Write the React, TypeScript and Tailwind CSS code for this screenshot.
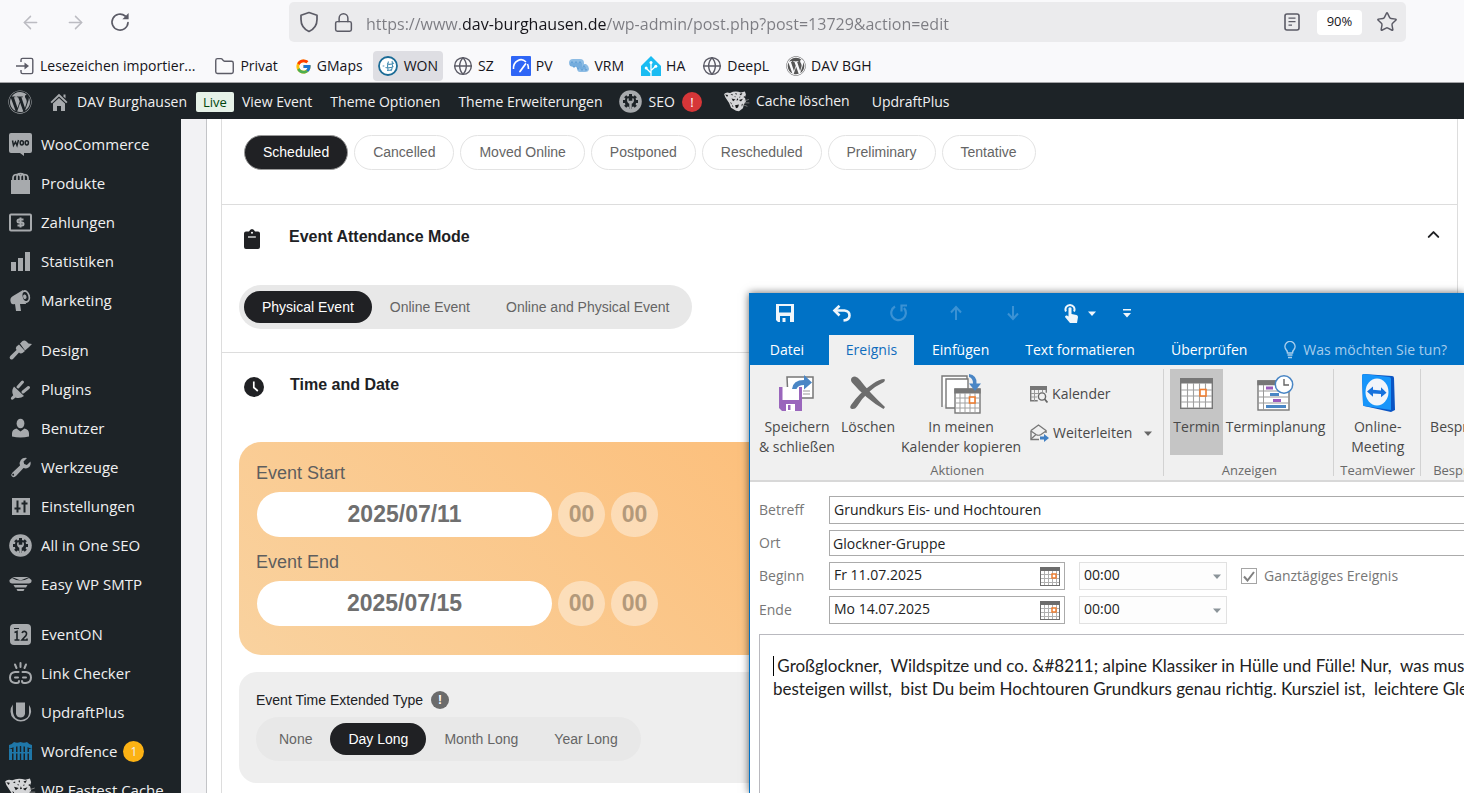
import React from "react";
import {
  ArrowLeft,
  ArrowRight,
  ChevronUp,
  Folder,
  Globe,
  Lock,
  Star,
} from "lucide-react";
import { FcGoogle } from "react-icons/fc";
import { FaWordpress } from "react-icons/fa";

/* ---------- icons ---------- */

const ReloadIcon = () => (
  <svg width="20" height="20" viewBox="0 0 20 20" fill="none">
    <path
      d="M18 10.5A8 8 0 1 1 15.2 4"
      stroke="#5b5b66"
      strokeWidth="1.7"
      strokeLinecap="round"
    />
    <path d="M18.6 1v6.2h-6.2z" fill="#5b5b66" />
  </svg>
);

const ShieldIcon = () => (
  <svg width="20" height="22" viewBox="0 0 20 22" fill="none">
    <path
      d="M10 1.5 18 4.2v4.3c0 5-2.8 9.6-8 12-5.2-2.4-8-7-8-12V4.2z"
      stroke="#5b5b66"
      strokeWidth="1.7"
      strokeLinejoin="round"
    />
  </svg>
);

const ReaderIcon = () => (
  <svg width="16" height="18" viewBox="0 0 16 18" fill="none" stroke="#5b5b66">
    <rect x="1" y="1" width="14" height="16" rx="2" strokeWidth="1.6" />
    <path d="M4.5 5.2h7M4.5 8.7h7M4.5 12.2h3.5" strokeWidth="1.3" />
  </svg>
);

const ImportIcon = () => (
  <svg width="18" height="18" viewBox="0 0 18 18" fill="none">
    <path
      d="M5 5V3q0-1.6 1.6-1.6h8.6q1.6 0 1.6 1.6v12q0 1.6-1.6 1.6H6.6q-1.6 0-1.6-1.6v-2"
      stroke="#5b5b66"
      strokeWidth="1.4"
    />
    <path d="M0 9h9" stroke="#5b5b66" strokeWidth="1.5" />
    <path d="M8.5 5.5 13 9l-4.5 3.5z" fill="#5b5b66" />
  </svg>
);

const WonIcon = () => (
  <svg width="20" height="20" viewBox="0 0 20 20" fill="none">
    <circle cx="10" cy="10" r="9" fill="#fff" stroke="#1a6b96" strokeWidth="1.8" />
    <path
      d="M9 8q4 1 7-1M7.5 11.500q4 1 8-1M9 14.500q3 0 5-1M10.500 5.500q-2 5 0 9.500M14 5q1.500 5-1 10"
      stroke="#4a90b4"
      strokeWidth="1.1"
    />
    <circle cx="5.5" cy="10" r="1" fill="#9cc4d8" />
  </svg>
);

const PvIcon = () => (
  <svg width="20" height="20" viewBox="0 0 20 20" fill="none">
    <rect width="20" height="20" rx="1" fill="#2f66f6" />
    <path
      d="M2.5 13a7.5 8.5 0 0 1 12.5-7M16.5 8q1 2 1 5"
      stroke="#fff"
      strokeWidth="1.6"
    />
    <path d="M9 15.5 14.5 8" stroke="#fff" strokeWidth="1.8" strokeLinecap="round" />
  </svg>
);

const VrmIcon = () => (
  <svg width="20" height="14" viewBox="0 0 20 14">
    <path d="M0 4q0-4 4-4h7q4 0 4 4v4H5Q0 8 0 4z" fill="#8dbce4" />
    <path d="M8 5h9q3 2 3 4.5 0 3.5-4 3.5h-5q-3 0-3-4z" fill="#8dbce4" />
    <path
      d="M2 7V4q1-3 2 0v3q1 3 2 0V4q1-3 2 0v4q1 4 2 1V4q1-3 2 0v6q1 3 2 0V8q1-3 2 0v2q1 3 2 0"
      fill="none"
      stroke="#5d9dd6"
      strokeWidth="1"
    />
  </svg>
);

const HomeAssistantIcon = () => (
  <svg width="20" height="20" viewBox="0 0 20 20">
    <path d="M10 0 20 10v10H0V10z" fill="#1abcf2" />
    <g stroke="#fff" strokeWidth="1.3" fill="none">
      <path d="M10 20V7M10 17l-4.5-4.5M10 14.5l4.5-4" />
    </g>
    <circle cx="10" cy="6.5" r="1.5" fill="#fff" />
    <circle cx="5.2" cy="12" r="1.5" fill="#fff" />
    <circle cx="14.8" cy="10.3" r="1.5" fill="#fff" />
  </svg>
);

const HomeIcon = () => (
  <svg width="18" height="18" viewBox="0 0 18 18" fill="#a7aaad">
    <path d="M9 .8 17.5 9l-1.3 1.3L9 3.5l-7.2 6.8L.5 9z" />
    <path d="M13.5 1.5h2v4l-2-2z" />
    <path d="m9 5 6 5.6V18h-4v-5H7v5H3v-7.4z" />
  </svg>
);

const SeoIcon = () => (
  <svg width="23" height="23" viewBox="0 0 23 23" className="shrink-0">
    <circle cx="11.5" cy="11.5" r="11.3" fill="#a7aaad" />
    <circle cx="11.5" cy="11.5" r="5.8" fill="#1d2327" />
    <path
      d="M11.5 4v15M4 11.5h15M6.2 6.2l10.600 10.600M16.800 6.200 6.200 16.800"
      stroke="#1d2327"
      strokeWidth="3"
    />
    <path
      d="M8.3 8.5q-1 4 2 5.2V19h2.400v-5.300q3-1.200 2-5.200l-1.400-.3v2.500h-3.600V8.200z"
      fill="#a7aaad"
    />
  </svg>
);

const CheetahIcon = ({ size = 26 }: { size?: number }) => (
  <svg width={size} height={size * 0.8} viewBox="0 0 26 21" className="shrink-0">
    <path
      d="M0 3q2-2.500 6-1 5-2.500 11-.500l4-1 1 3-1 3 1 4-2 3-1 4-4 3-3-.5L7 17 5 12 1 6z"
      fill="#d5d6d8"
    />
    <path
      d="M1 3.500 4 4 3 6zM6.500 3.500l2-.5v1.500zM11 2.500l1.500-.5v2zM15.500 3l3-1-1.500 2.500zM7.500 7.500l4 1-2.500 1.800zM15 9l4-1.200-2 2.700zM11 14.500l4-.8-1 3-2 .8zM19.500 6l1.500-1v2zM6 11l1.500 1v2zM17.500 14l1.500-1.500-1 3.500zM12.500 9.500l.8-2.500 1 2zM8.500 14l1 2.500-1.500-1zM10 5.800l1.500-.5v1zM15 6l1.500-.5-.5 1.200z"
      fill="#17191b"
    />
    <path d="m20.500 10 4.500-1.500M20.500 12l5 0M19.500 14l4 1.500" stroke="#999" strokeWidth=".7" />
  </svg>
);

const menuIcons: Record<string, React.ReactNode> = {
  woo: (
    <>
      <path d="M2 0h19q2 0 2 2v16q0 2-2 2h-6v3l-4-3H2q-2 0-2-2V2q0-2 2-2z" />
      <path
        d="m3.500 7.500 1 5L6.500 9 8 12.500l1.500-5.500"
        fill="none"
        stroke="#1d2327"
        strokeWidth="1.500"
      />
      <ellipse cx="12.800" cy="9.800" rx="1.600" ry="2.100" fill="none" stroke="#1d2327" strokeWidth="1.500" />
      <ellipse cx="17.800" cy="9.800" rx="1.600" ry="2.100" fill="none" stroke="#1d2327" strokeWidth="1.500" />
    </>
  ),
  products: (
    <>
      <path d="M2 8h19v14H2z" />
      <path
        d="M4 10V6q0-3.500 4-3.500t3.500 3.500v3M19 10V6q0-3.500-4-3.500T11.500 6v3M8 9V5q0-3.500 3.500-3.500T15 5v4"
        fill="none"
        stroke="#a7aaad"
        strokeWidth="1.700"
      />
    </>
  ),
  payments: (
    <>
      <rect x="1" y="3.500" width="21" height="16" rx="1" fill="none" stroke="#a7aaad" strokeWidth="2" />
      <path
        d="M14.500 8.500H10q-1.500 0-1.500 1.500t1.500 1.500h3q1.500 0 1.500 1.500t-1.500 1.500H8.500M11.500 6.500v10"
        fill="none"
        stroke="#a7aaad"
        strokeWidth="2"
      />
    </>
  ),
  stats: <path d="M2 12h5v9H2zM9 8h5v13H9zM16 2h5v19h-5z" />,
  marketing: (
    <>
      <path d="M14 1 4 7q-4 2-2 7 1 2 4 1l1 7h5l-1-7 6 0z" />
      <ellipse cx="16.500" cy="7.500" rx="4.500" ry="6.500" transform="rotate(-15 16.500 7.500)" />
      <ellipse cx="16.500" cy="7.500" rx="2.800" ry="4.600" transform="rotate(-15 16.500 7.500)" fill="#1d2327" />
      <ellipse cx="15.800" cy="7.800" rx="1.700" ry="2.400" transform="rotate(-15 15.800 7.800)" />
    </>
  ),
  design: (
    <>
      <path d="M11 4.500 13.500 2q2-1.200 4 .5l2 2 3.500.5-3.500 3.500-3.500 3z" />
      <path d="m10 5.500 6 6.500-2.500 2q-2 1-3.500-.5L4 20q-2 1.300-3-.2t.5-3L7.500 11Q6 9 7.500 7.500z" />
    </>
  ),
  plugins: (
    <>
      <path d="M5 8.500 15 18q-4 3-8.500 1.500L4 21.500q-1.500.5-2-.5t.5-2l1.700-1.800Q2 13 5 8.500z" />
      <path d="m9 9 4.500-5M14 14l5.500-4.500" stroke="#a7aaad" strokeWidth="3" strokeLinecap="round" />
    </>
  ),
  users: (
    <>
      <ellipse cx="11.500" cy="6.500" rx="3.900" ry="4.800" />
      <path d="M3 19.500v-3q0-4 4.500-5l4 3 4-3q4.500 1 4.500 5v3q-8.500 2-17 0z" />
    </>
  ),
  tools: (
    <path d="M18 2 14.500 5.500l.7 2.600 2.700.8L21.500 5.500q.8 4-2 6-2.500 1.500-5 .5L7 20q-2 2-4 .5-1.500-2 .5-4L11 9.500q-1-3 .8-5.500Q14 1.300 18 2zM5 18a1 1 0 1 0 .1 1z" />
  ),
  settings: (
    <>
      <path d="M3 3h18v17H3z" />
      <path
        d="M8.500 5.500v12M15.500 17.500v-12M5.500 13.500h6M12.500 8.500h6"
        stroke="#1d2327"
        strokeWidth="2"
      />
    </>
  ),
  smtp: (
    <>
      <path d="M3 4h17l-8.500 3.500z" />
      <path d="M.5 7 3 5q8.500 5 17 0l2.500 2q.5 3-2.500 3.500H3Q0 10 .5 7z" />
      <path d="M4.500 12h14l-1.500 2.500H6zM7.500 16h8l-1 2h-6z" />
    </>
  ),
  eventon: (
    <>
      <rect x="1" y="1" width="21" height="21" rx="4" />
      <path d="M5 5.500h5" stroke="#1d2327" strokeWidth="1" />
      <path
        d="M5.500 9.500 8 8.500V17M5.500 17h5M13 10q1-2 3-1.500 2.500 1 1 4L13 17h5v-1.500"
        fill="none"
        stroke="#1d2327"
        strokeWidth="1.600"
      />
    </>
  ),
  link: (
    <g fill="none" stroke="#a7aaad" strokeWidth="2" strokeLinecap="round">
      <path d="M11.500 1v4M6 2.500 7.500 6M17 2.500 15.500 6" />
      <path d="M9.500 10H6q-5 .5-5 5.500T6 21h2q2 0 2-2M13.500 10H17q5 .5 5 5.500T17 21h-2q-2 0-2-2M6 15.500h3M14 15.500h3" />
    </g>
  ),
  updraft: (
    <>
      <path d="M4 3.500A10.300 10.300 0 1 0 20 4v8a8 7 0 0 1-13.500 5Q3 13 4 3.500z" />
      <path d="M7 1.500h9V13q-1 3.500-4.500 3.500T7 13z" />
    </>
  ),
  wordfence: (
    <g fill="#1f77a8">
      <path d="M0 5q3-.5 5-3 3 1.500 6.500 0 3.500 1.500 6.500 0 2 2.500 5 3v4q-11.500-6-23 0z" />
      <path d="M0 9h3v11H0zM4.500 6H7v14H4.500zM8.500 5h2.300v15H8.500zM12.200 5h2.300v15h-2.300zM16 6h2.500v14H16zM20 9h3v11h-3z" />
      <path d="M0 12h23v1.500H0z" />
    </g>
  ),
};

const MenuIcon = ({ name }: { name: string }) => (
  <svg width="23" height="23" viewBox="0 0 23 23" fill="#a7aaad" className="shrink-0">
    {menuIcons[name]}
  </svg>
);

/* ---------- browser ---------- */

const bookmarks = [
  { label: "Privat", icon: <Folder size={21} strokeWidth={1.6} color="#5b5b66" /> },
  { label: "GMaps", icon: <FcGoogle size={17} /> },
  { label: "WON", icon: <WonIcon />, active: true },
  { label: "SZ", icon: <Globe size={20} strokeWidth={1.7} color="#5b5b66" /> },
  { label: "PV", icon: <PvIcon /> },
  { label: "VRM", icon: <VrmIcon /> },
  { label: "HA", icon: <HomeAssistantIcon /> },
  { label: "DeepL", icon: <Globe size={20} strokeWidth={1.7} color="#5b5b66" /> },
  { label: "DAV BGH", icon: <FaWordpress size={20} color="#555" /> },
];

const BrowserBar = () => (
  <header className="border-b border-[#a3a3a6] bg-[#f9f9fb] text-[#15141a]">
    <div className="flex items-center pt-[2px] pr-[58px] pl-5">
      <div className="flex w-[269px] items-center gap-6">
        <button aria-label="Zurück">
          <ArrowLeft size={21} strokeWidth={1.7} color="#bcbcc2" />
        </button>
        <button aria-label="Vor">
          <ArrowRight size={21} strokeWidth={1.7} color="#bcbcc2" />
        </button>
        <button aria-label="Neu laden">
          <ReloadIcon />
        </button>
      </div>
      <div className="flex h-10 flex-1 items-center rounded-[5px] bg-[#ebebed] pr-2 pl-[10px]">
        <ShieldIcon />
        <Lock size={21} strokeWidth={1.7} color="#5b5b66" className="ml-[14px]" />
        <input
          aria-label="Adresse"
          readOnly
          value="https://www.dav-burghausen.de/wp-admin/post.php?post=13729&action=edit"
          className="ml-3 min-w-0 flex-1 bg-[linear-gradient(90deg,#7c7c82_97px,#15141a_97px,#15141a_241px,#7c7c82_241px)] bg-clip-text pt-[3px] text-base text-transparent outline-none"
        />
        <ReaderIcon />
        <button className="mr-[14px] ml-[17px] h-[25px] w-[45px] rounded-[4px] bg-white text-[13px]">
          90%
        </button>
        <button aria-label="Lesezeichen hinzufügen">
          <Star size={22} strokeWidth={1.6} color="#5b5b66" />
        </button>
      </div>
    </div>
    <nav className="flex h-10 items-center gap-[3px] pt-2 pl-2 text-sm">
      <a href="#" className="flex items-center gap-[6px] pr-[9px] pl-2 whitespace-nowrap">
        <ImportIcon />
        Lesezeichen importier...
      </a>
      {bookmarks.map((item) => (
        <a
          key={item.label}
          href="#"
          className={
            item.active
              ? "flex h-[30px] items-center gap-[6px] rounded-[4px] bg-[#dedee3] px-[5px]"
              : "flex h-[30px] items-center gap-[5px] px-[7px] whitespace-nowrap"
          }
        >
          {item.icon}
          {item.label}
        </a>
      ))}
    </nav>
  </header>
);

/* ---------- wordpress ---------- */

const AdminBar = () => (
  <div className="flex h-9 items-center bg-[#1d2327] pt-px pl-2 text-sm whitespace-nowrap text-[#f0f0f1]">
    <a href="#" aria-label="Über WordPress">
      <FaWordpress size={24} color="#a7aaad" />
    </a>
    <a href="#" className="ml-[18px] flex items-center gap-[9px]">
      <HomeIcon />
      DAV Burghausen
    </a>
    <a
      href="#"
      className="ml-[9px] h-5 rounded-[2px] bg-[#e6f2e8] px-[7px] text-[13px] leading-5 text-[#00450c]"
    >
      Live
    </a>
    <a href="#" className="ml-2">
      View Event
    </a>
    <a href="#" className="ml-[18px]">
      Theme Optionen
    </a>
    <a href="#" className="ml-[18px]">
      Theme Erweiterungen
    </a>
    <a href="#" className="ml-4 flex items-center gap-[7px]">
      <SeoIcon />
      SEO
      <span className="size-5 rounded-full bg-[#d63638] text-center text-[13px] leading-5 text-white">
        !
      </span>
    </a>
    <a href="#" className="ml-[22px] flex items-center gap-[6px]">
      <CheetahIcon />
      Cache löschen
    </a>
    <a href="#" className="ml-[22px]">
      UpdraftPlus
    </a>
  </div>
);

const menuGroups = [
  [
    { label: "WooCommerce", icon: "woo" },
    { label: "Produkte", icon: "products" },
    { label: "Zahlungen", icon: "payments" },
    { label: "Statistiken", icon: "stats" },
    { label: "Marketing", icon: "marketing" },
  ],
  [
    { label: "Design", icon: "design" },
    { label: "Plugins", icon: "plugins" },
    { label: "Benutzer", icon: "users" },
    { label: "Werkzeuge", icon: "tools" },
    { label: "Einstellungen", icon: "settings" },
    { label: "All in One SEO", icon: "seo" },
    { label: "Easy WP SMTP", icon: "smtp" },
  ],
  [
    { label: "EventON", icon: "eventon" },
    { label: "Link Checker", icon: "link" },
    { label: "UpdraftPlus", icon: "updraft" },
    { label: "Wordfence", icon: "wordfence", count: 1 },
    { label: "WP Fastest Cache", icon: "cheetah" },
  ],
];

const renderMenuIcon = (icon: string) => {
  if (icon === "seo") return <SeoIcon />;
  if (icon === "cheetah")
    return (
      <span className="-ml-1 w-[27px] shrink-0">
        <CheetahIcon size={31} />
      </span>
    );
  return <MenuIcon name={icon} />;
};

const SideMenu = () => (
  <nav className="flex w-[181px] shrink-0 flex-col gap-[11px] overflow-hidden bg-[#1d2327] pt-[6px] text-[15px] text-[#f0f0f1]">
    {menuGroups.map((group, i) => (
      <ul key={i}>
        {group.map((item) => (
          <li key={item.label}>
            <a href="#" className="flex h-[39px] items-center gap-[9px] pl-[9px] whitespace-nowrap">
              {renderMenuIcon(item.icon)}
              {item.label}
              {item.count && (
                <span className="-ml-[3px] size-[21px] rounded-full bg-[#fcb214] text-center text-xs leading-[21px]">
                  {item.count}
                </span>
              )}
            </a>
          </li>
        ))}
      </ul>
    ))}
  </nav>
);

const statuses = [
  "Scheduled",
  "Cancelled",
  "Moved Online",
  "Postponed",
  "Rescheduled",
  "Preliminary",
  "Tentative",
];

interface SegmentedProps {
  options: string[];
  selected: string;
}

const Segmented = ({ options, selected }: SegmentedProps) => (
  <div className="flex h-11 w-fit items-center rounded-full bg-[#e8e8e8] px-[5px]">
    {options.map((option) => (
      <button
        key={option}
        className={
          option === selected
            ? "h-8 rounded-full bg-[#202124] px-[18px] text-white"
            : "h-8 px-[18px] text-[#656565]"
        }
      >
        {option}
      </button>
    ))}
  </div>
);

interface DateRowProps {
  id: string;
  label: string;
  date: string;
}

const DateRow = ({ id, label, date }: DateRowProps) => (
  <div>
    <label htmlFor={id} className="block text-lg leading-6 text-[#5e5e5e]">
      {label}
    </label>
    <div className="mt-[7px] flex gap-[6px] pl-px text-[23px] font-bold">
      <input
        id={id}
        readOnly
        value={date}
        className="h-[45px] w-[295px] rounded-full bg-white text-center text-[#6f6f6f]"
      />
      {["Stunde", "Minute"].map((part) => (
        <input
          key={part}
          aria-label={`${label} ${part}`}
          readOnly
          value="00"
          className="h-[45px] w-[47px] rounded-full bg-white/40 text-center text-[#b3997a]"
        />
      ))}
    </div>
  </div>
);

const EventForm = () => (
  <main className="flex min-w-0 flex-1 bg-[#f2f2f4] pl-[25px] font-['Liberation_Sans',sans-serif] text-sm text-[#202124]">
    <div className="min-w-0 flex-1 border-l border-[#c3c4c7] bg-white pr-[6px] pl-[14px]">
      <div className="h-full border-x border-[#dddddd]">
        <section className="flex h-[86px] gap-[6px] border-b border-[#dddddd] pt-4 pl-[22px]">
          {statuses.map((status, i) => (
            <button
              key={status}
              className={
                i === 0
                  ? "h-[35px] rounded-full border border-[#9a9a9a] bg-[#202124] px-[18px] pb-[2px] text-white"
                  : "h-[35px] rounded-full border border-[#e3e3e3] px-[18px] pb-[2px] text-[#656565]"
              }
            >
              {status}
            </button>
          ))}
        </section>

        <section className="h-[148px] border-b border-[#dddddd] pr-[14px] pl-[17px]">
          <div className="flex h-20 items-start pt-5">
            <svg width="16" height="20" viewBox="0 0 16 20" className="mt-1 ml-[5px]" fill="#202124">
              <path d="M2 2.500h3Q6 0 8 0t3 2.500h3q2 0 2 2V18q0 2-2 2H2q-2 0-2-2V4.500q0-2 2-2z" />
              <path d="M4 8h8" stroke="#fff" strokeWidth="1.200" />
              <circle cx="8" cy="3.800" r="1" fill="#fff" />
            </svg>
            <h2 className="ml-[29px] flex-1 text-base font-bold">Event Attendance Mode</h2>
            <button aria-label="Einklappen" className="flex">
              <ChevronUp size={19} strokeWidth={2.5} />
            </button>
          </div>
          <Segmented
            options={["Physical Event", "Online Event", "Online and Physical Event"]}
            selected="Physical Event"
          />
        </section>

        <section className="px-[17px]">
          <div className="flex h-[89px] items-start pt-5">
            <svg width="20" height="20" viewBox="0 0 20 20" className="mt-1 ml-[5px]">
              <circle cx="10" cy="10" r="10" fill="#202124" />
              <path d="M9.800 4.500V10.500l4 3.500" fill="none" stroke="#fff" strokeWidth="1.700" />
            </svg>
            <h2 className="ml-[26px] text-base font-bold">Time and Date</h2>
          </div>
          <div className="flex h-[213px] flex-col gap-[13px] rounded-[22px] bg-[linear-gradient(45deg,#f9d29f,#ffae5b)] pt-[19px] pl-[17px]">
            <DateRow id="event-start" label="Event Start" date="2025/07/11" />
            <DateRow id="event-end" label="Event End" date="2025/07/15" />
          </div>
          <div className="mt-[17px] h-[111px] rounded-[18px] bg-[#eeeeee] pt-[18px] pl-[17px]">
            <p className="mb-[7px] flex items-center gap-2 leading-5">
              Event Time Extended Type
              <span className="size-[18px] rounded-full bg-[#6b6b6b] text-center text-xs leading-[18px] font-bold text-white">
                !
              </span>
            </p>
            <Segmented
              options={["None", "Day Long", "Month Long", "Year Long"]}
              selected="Day Long"
            />
          </div>
        </section>
      </div>
    </div>
  </main>
);

/* ---------- outlook ---------- */

const CalendarGrid = ({ width, height }: { width: number; height: number }) => (
  <svg width={width} height={height} viewBox="0 0 33 31">
    <rect x=".7" y=".7" width="31.600" height="29.600" fill="#fff" stroke="#777" strokeWidth="1.400" />
    <rect width="33" height="5.500" fill="#777" />
    <path
      d="M1 12h31M1 18h31M1 24h31M7.500 5v25M13.500 5v25M19.500 5v25M25.500 5v25"
      stroke="#a0a0a0"
      strokeWidth="1.100"
    />
    <rect x="20" y="11.500" width="6" height="6.500" fill="#fff" stroke="#ed7d31" strokeWidth="1.600" />
  </svg>
);

const SmallCalendarIcon = () => (
  <svg width="20" height="19" viewBox="0 0 20 19">
    <rect x=".5" y=".5" width="19" height="18" fill="#fff" stroke="#6d6d6d" />
    <path d="M0 0h20v4H0z" fill="#6d6d6d" />
    <path d="M1 7.500h18M1 11.500h18M1 15.500h18M4.500 4v14M8.500 4v14M12.500 4v14M16.500 4v14" stroke="#b0b0b0" />
    <rect x="12" y="7" width="4" height="4" fill="#fff" stroke="#ed7d31" strokeWidth="1.500" />
  </svg>
);

const SaveCloseIcon = () => (
  <svg width="37" height="38" viewBox="0 0 37 38">
    <path d="M9 3h26v21H10z" fill="#fff" stroke="#777" strokeWidth="1.500" />
    <path d="M25 17h7M25 20h7" stroke="#999" strokeWidth="1.200" />
    <path d="M1 13h23v24H4l-3-3z" fill="#9a66bc" />
    <path d="M4.500 13H21v13H4.500z" fill="#fff" />
    <path d="M8 30h9v7H8z" fill="#fff" />
    <path d="M10 31h2.500v5H10z" fill="#9a66bc" />
    <path d="M14 15q1-9 12-9V1l8 7.500-8 7V11q-6 0-7.500 4z" fill="#4a86c5" />
  </svg>
);

const DeleteIcon = () => (
  <svg width="37" height="36" viewBox="0 0 37 36" fill="#6d6d6d">
    <path d="M2 5q0-3.500 4-3.500 3 .5 5 3.500 9 12 25 27l-1.500 2Q17 24 3 7.500 2 6 2 5z" />
    <path d="M35.500 4q-5 0-12 5Q10 18 2 30q-2 3 1 4 3 .5 5-2.500Q18 15 35 7q1.500-1.500.5-3z" />
  </svg>
);

const CopyCalendarIcon = () => (
  <svg width="40" height="41" viewBox="0 0 40 41">
    <path d="M1 34V3h25v6" fill="#fff" stroke="#777" strokeWidth="1.400" />
    <path d="M5 35V6h22v29z" fill="#fff" stroke="#777" strokeWidth="1.400" />
    <rect x="14" y="16" width="25" height="24" fill="#fff" stroke="#777" strokeWidth="1.400" />
    <path d="M13.300 15.500h26.400v5H13.300z" fill="#777" />
    <path d="M14 25h25M14 30h25M14 35h25M19 20v20M24 20v20M29 20v20M34 20v20" stroke="#a0a0a0" />
    <rect x="28.500" y="24" width="5.500" height="6" fill="#fff" stroke="#ed7d31" strokeWidth="1.600" />
    <path d="M28 1q8 1 7.500 9.500H40l-6 7.500-6-7.500h4Q32 5 28 4z" fill="#4a86c5" />
  </svg>
);

const ScheduleIcon = () => (
  <svg width="37" height="36" viewBox="0 0 37 36">
    <rect x="1" y="6" width="31" height="29" fill="#fff" stroke="#777" strokeWidth="1.400" />
    <path d="M.3 5.300h32v5H.3z" fill="#777" />
    <path d="M1 16h31M1 22h31M1 28h31M6.500 10v25" stroke="#999" />
    <path d="M9 13h7M16 25.500h8" stroke="#9a5bbc" strokeWidth="2.800" />
    <path d="M13 19.500h9M9 31.500h20" stroke="#4a86c5" strokeWidth="2.800" />
    <circle cx="27" cy="9.500" r="8.700" fill="#fff" stroke="#4a86c5" strokeWidth="1.500" />
    <path d="M27 4v6h5" fill="none" stroke="#666" strokeWidth="1.400" />
  </svg>
);

const TeamViewerIcon = () => (
  <svg width="34" height="40" viewBox="0 0 34 40">
    <path d="M1 3q0-2 2-2l28 2q2 0 2 2l1 32-4 2-27-6q-1 0-1-2z" fill="#0a55c4" />
    <path d="M1 3q0-2 2-2l25 3q2 0 2 2v31L3 33q-1 0-1-2z" fill="#1795fa" />
    <ellipse cx="16" cy="19" rx="11.500" ry="13.500" fill="#f1f5fa" />
    <path d="m6 18.500 6-5v3.300l8 .8v-3.300l5.500 5.500-5.500 4.500v-3.200l-8-.7v3.300z" fill="#1672dd" />
  </svg>
);

const Caret = ({ color }: { color: string }) => (
  <svg width="8" height="5" viewBox="0 0 8 5" fill={color}>
    <path d="M0 .5h8L4 5z" />
  </svg>
);

const QuickAccess = () => (
  <div className="flex h-[42px] items-center pb-[2px] pl-[6px] [&>button]:flex [&>button]:w-[57px] [&>button]:justify-center">
    <button aria-label="Speichern">
      <svg width="18" height="18" viewBox="0 0 18 18">
        <path d="M0 0h18v18H2l-2-2z" fill="#f0f6fb" />
        <path d="M3 2h12v6.500H3zM4 12h10v6H4z" fill="#0072c6" />
        <path d="M6.500 14h3v4h-3z" fill="#f0f6fb" />
      </svg>
    </button>
    <button aria-label="Rückgängig">
      <svg width="19" height="17" viewBox="0 0 19 17" fill="none" stroke="#f0f6fb">
        <path d="M3 5.500h9.500q5 .5 5 5t-6 5" strokeWidth="2.600" />
        <path d="M7.500.8 2.500 5.500l5 5" strokeWidth="2.600" />
      </svg>
    </button>
    <button aria-label="Wiederholen">
      <svg width="18" height="18" viewBox="0 0 18 18" fill="none" stroke="#3b92d4" strokeWidth="2.200">
        <path d="M5 2.500a7.300 7.300 0 1 0 9 1.500" />
        <path d="M17 1.500h-5.500v6" />
      </svg>
    </button>
    <button aria-label="Vorheriges Element">
      <svg width="12" height="16" viewBox="0 0 12 16" fill="none" stroke="#3b92d4" strokeWidth="2">
        <path d="M6 15V2M1 7.500 6 2l5 5.500" />
      </svg>
    </button>
    <button aria-label="Nächstes Element">
      <svg width="12" height="16" viewBox="0 0 12 16" fill="none" stroke="#3b92d4" strokeWidth="2">
        <path d="M6 1v13M1 8.500 6 14l5-5.500" />
      </svg>
    </button>
    <button aria-label="Touch-/Mausmodus" className="items-center gap-[10px] pl-5">
      <svg width="14" height="20" viewBox="0 0 14 20" className="shrink-0">
        <path d="M2 8.500a4.500 4.500 0 1 1 8 0" fill="none" stroke="#f0f6fb" strokeWidth="2" />
        <path
          d="M4.500 5q1.500-1.500 3 0v6l5 1q1.500.5 1.500 2l-1 6H6l-5-6q0-2 2-1.500l1.500 1z"
          fill="#f0f6fb"
        />
      </svg>
      <Caret color="#f0f6fb" />
    </button>
    <button aria-label="Anpassen">
      <svg width="8" height="9" viewBox="0 0 8 9" fill="#f0f6fb">
        <path d="M0 0h8v1.600H0zM0 4h8L4 8.500z" />
      </svg>
    </button>
  </div>
);

const BigButton = ({
  icon,
  lines,
  active,
}: {
  icon: React.ReactNode;
  lines: string[];
  active?: boolean;
}) => (
  <button
    className={
      active
        ? "flex h-[86px] flex-col items-center bg-[#c5c5c5] px-[3px]"
        : "flex h-[86px] flex-col items-center px-[3px]"
    }
  >
    <span className="flex h-12 shrink-0 items-center">{icon}</span>
    {lines.map((line) => (
      <span key={line} className="leading-5 whitespace-nowrap">
        {line}
      </span>
    ))}
  </button>
);

const RibbonGroup = ({
  title,
  children,
}: {
  title: string;
  children: React.ReactNode;
}) => (
  <div className="relative flex shrink-0 flex-col justify-between px-[6px] pt-1 after:absolute after:top-1 after:right-0 after:bottom-1 after:border-r after:border-[#d2d2d2]">
    <div className="flex">{children}</div>
    <p className="text-center text-[13px] leading-5 text-[#6a6a6a]">{title}</p>
  </div>
);

const Ribbon = () => (
  <div className="flex h-[117px] border-b-2 border-[#d8d8d8] bg-[#f0f0f0] text-sm text-[#494949]">
    <RibbonGroup title="Aktionen">
      <div className="flex">
        <BigButton icon={<SaveCloseIcon />} lines={["Speichern", "& schließen"]} />
        <BigButton icon={<DeleteIcon />} lines={["Löschen"]} />
        <BigButton icon={<CopyCalendarIcon />} lines={["In meinen", "Kalender kopieren"]} />
      </div>
      <div className="ml-[6px] flex flex-col gap-[19px] pt-[15px]">
        <button className="flex items-center gap-1 leading-5">
          <svg width="18" height="17" viewBox="0 0 18 17" fill="none">
            <path d="M.7.7h15.600v6M.7.700v14h7" stroke="#777" strokeWidth="1.400" />
            <path d="M0 0h17v4H0z" fill="#777" />
            <path d="M1 7.500h8M1 11h6M4.500 4v11M8.500 4v4M12.500 4v2" stroke="#999" />
            <circle cx="12" cy="10.500" r="3.600" fill="#f0f0f0" stroke="#666" strokeWidth="1.400" />
            <path d="m14.500 13 3 3.500" stroke="#666" strokeWidth="1.800" />
          </svg>
          Kalender
        </button>
        <button className="flex items-center gap-1 pr-[6px] leading-5">
          <svg width="19" height="18" viewBox="0 0 19 18" fill="none">
            <path d="M1 6.500 8.500 1 16 6.500V9M1 6.500v9h8" stroke="#777" strokeWidth="1.400" />
            <path d="m1 7 5 3.500q2.500 1.500 5 0L16 7M1 15l5-4.500" stroke="#777" strokeWidth="1.200" />
            <path d="M10 12.500h4V10l5 4-5 4v-2.500h-4z" fill="#3f7fc4" />
          </svg>
          Weiterleiten
          <span className="pl-2">
            <Caret color="#666" />
          </span>
        </button>
      </div>
    </RibbonGroup>
    <RibbonGroup title="Anzeigen">
      <BigButton icon={<CalendarGrid width={33} height={31} />} lines={["Termin"]} active />
      <BigButton icon={<ScheduleIcon />} lines={["Terminplanung"]} />
    </RibbonGroup>
    <RibbonGroup title="TeamViewer">
      <div className="flex flex-1 justify-center">
        <BigButton icon={<TeamViewerIcon />} lines={["Online-", "Meeting"]} />
      </div>
    </RibbonGroup>
    <RibbonGroup title="Besprechung">
      <BigButton icon={null} lines={["Besprechung"]} />
    </RibbonGroup>
  </div>
);

const fields = [
  { id: "beginn", label: "Beginn", date: "Fr 11.07.2025" },
  { id: "ende", label: "Ende", date: "Mo 14.07.2025" },
];

const AppointmentForm = () => (
  <div className="flex flex-1 flex-col bg-white pt-[14px] pl-[9px] text-sm text-[#222]">
    <div className="flex flex-col gap-[6px]">
      <div className="flex items-center">
        <label htmlFor="betreff" className="w-[70px] text-[#777]">
          Betreff
        </label>
        <input
          id="betreff"
          readOnly
          value="Grundkurs Eis- und Hochtouren"
          className="h-7 min-w-0 flex-1 border border-r-0 border-[#ababab] px-1 pb-[2px]"
        />
      </div>
      <div className="flex items-center">
        <label htmlFor="ort" className="w-[70px] text-[#777]">
          Ort
        </label>
        <input
          id="ort"
          readOnly
          value="Glockner-Gruppe"
          className="h-[26px] min-w-0 flex-1 border border-r-0 border-[#ababab] px-[3px]"
        />
      </div>
      {fields.map((field) => (
        <div key={field.id} className="flex items-center">
          <label htmlFor={field.id} className="w-[70px] text-[#777]">
            {field.label}
          </label>
          <div className="flex h-7 w-[236px] items-center border border-[#ababab] px-1">
            <input
              id={field.id}
              readOnly
              value={field.date}
              className="min-w-0 flex-1 pb-[2px] outline-none"
            />
            <SmallCalendarIcon />
          </div>
          <div className="relative ml-[14px]">
            <select
              aria-label={`${field.label} Uhrzeit`}
              className="h-7 w-[148px] appearance-none border border-[#e1e1e1] bg-[#fdfdfd] px-1 pb-[2px]"
            >
              <option>00:00</option>
            </select>
            <span className="pointer-events-none absolute top-3 right-[6px]">
              <Caret color="#8b9499" />
            </span>
          </div>
          {field.id === "beginn" && (
            <label className="ml-[14px] flex items-center gap-[7px] text-[#777]">
              <input
                type="checkbox"
                defaultChecked
                className="peer size-4 appearance-none border border-[#a5a5a5] bg-white"
              />
              <svg
                width="12"
                height="11"
                viewBox="0 0 12 11"
                className="-mr-[2px] -ml-[21px] hidden peer-checked:block"
              >
                <path d="m1 5.500 3.500 4L11 1" fill="none" stroke="#808080" strokeWidth="2" />
              </svg>
              <span className="pl-1">Ganztägiges Ereignis</span>
            </label>
          )}
        </div>
      ))}
    </div>
    <div className="relative mt-[10px] flex flex-1 border-t border-l border-[#b9b9bf]">
      <textarea
        aria-label="Beschreibung"
        readOnly
        wrap="off"
        defaultValue={
          " Großglockner,  Wildspitze und co. &#8211; alpine Klassiker in Hülle und Fülle! Nur,  was musst Du\nbesteigen willst,  bist Du beim Hochtouren Grundkurs genau richtig. Kursziel ist,  leichtere Gletscher"
        }
        className="min-w-0 flex-1 resize-none overflow-hidden pt-[19px] pl-[13px] font-['Lato',sans-serif] text-[17px] leading-[23px] outline-none"
      />
      <span className="absolute top-[21px] left-[13px] h-5 w-px bg-black" />
    </div>
  </div>
);

const tabs = ["Einfügen", "Text formatieren", "Überprüfen"];

const OutlookWindow = () => (
  <div className="absolute top-[293px] right-0 bottom-0 left-[749px] flex flex-col overflow-hidden border-l border-[#0072c6] bg-white shadow-[0_0_8px_rgba(0,0,0,0.6)]">
    <div className="bg-[#0072c6] text-white">
      <QuickAccess />
      <div className="flex h-[30px] items-center text-sm whitespace-nowrap">
        <button className="w-[79px] pr-[5px]">Datei</button>
        <button className="h-full w-[85px] bg-[#f0f0f0] text-[#0f6cbd]">Ereignis</button>
        {tabs.map((tab) => (
          <button key={tab} className="px-[18px]">
            {tab}
          </button>
        ))}
        <button className="flex items-center gap-[7px] pl-[19px] text-[#a6cdec]">
          <svg width="12" height="18" viewBox="0 0 12 18" fill="none" stroke="#a6cdec">
            <path d="M3.500 12q0-2-1.500-3.500A5 5 0 1 1 10 8.500Q8.500 10 8.500 12z" strokeWidth="1.500" />
            <path d="M3.500 14h5M4 16.500h4" strokeWidth="1.500" />
          </svg>
          Was möchten Sie tun?
        </button>
      </div>
    </div>
    <Ribbon />
    <AppointmentForm />
  </div>
);

const App = () => {
  return (
    <div className="relative flex h-screen flex-col overflow-hidden font-['Open_Sans',sans-serif]">
      <BrowserBar />
      <AdminBar />
      <div className="flex min-h-0 flex-1">
        <SideMenu />
        <EventForm />
      </div>
      <OutlookWindow />
    </div>
  );
};

export default App;
